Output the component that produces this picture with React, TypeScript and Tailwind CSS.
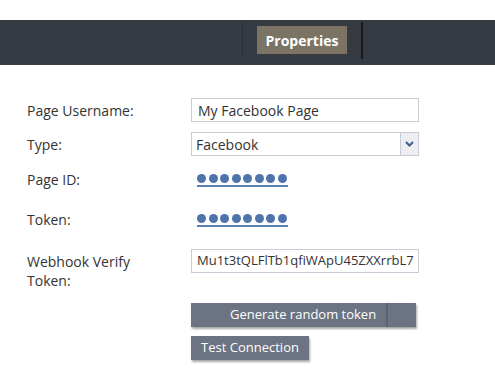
function Dots() {
  return (
    <div className="flex flex-col items-start">
      <div className="flex gap-[2.5px] pb-[2px]">
        {Array.from({ length: 8 }).map((_, i) => (
          <span key={i} className="h-[9px] w-[9px] rounded-full bg-[#4f74ab]" />
        ))}
      </div>
      <div className="h-[1.5px] w-[91px] bg-[#5a7fb5]" />
    </div>
  );
}

export default function App() {
  return (
    <div className="h-[388px] w-[495px] bg-white font-['Open_Sans',sans-serif] text-[#333]">
      <div className="h-5" />
      <div className="flex h-[45px] items-start bg-[#363a43]">
        <div className="ml-[242px] mt-[2px] h-[36px] w-px bg-[#2a2d34]" />
        <div className="ml-[14px] mt-[6px] flex h-[28px] w-[90px] items-center justify-center bg-[#7b7465] text-[14px] font-bold text-white">
          Properties
        </div>
        <div className="ml-[14px] mt-[2px] h-[37px] w-[2px] bg-[#16181c]" />
      </div>

      <div className="grid grid-cols-[164px_228px] pl-[27px] pt-[33px] text-[14px]">
        <div className="flex h-6 items-center">Page Username:</div>
        <div className="flex h-6 items-center border border-[#c9cbd6] px-[6px]">My Facebook Page</div>

        <div className="mt-[10px] flex h-6 items-center">Type:</div>
        <div className="mt-[10px] flex h-6 items-center border border-[#c9cbd6]">
          <span className="flex-1 pl-[4px]">Facebook</span>
          <div className="flex h-full w-[18px] items-center justify-center border-l border-[#c9cbd6] bg-[#eceef2]">
            <svg width="9" height="6" viewBox="0 0 9 6">
              <path d="M1 1l3.5 3.5L8 1" stroke="#3d5f8f" strokeWidth="2" fill="none" />
            </svg>
          </div>
        </div>

        <div className="mt-[11px] flex h-6 items-center">Page ID:</div>
        <div className="mt-[11px] flex h-6 items-center pl-[6px] pt-[3px]">
          <Dots />
        </div>

        <div className="mt-[16px] flex h-6 items-center">Token:</div>
        <div className="mt-[16px] flex h-6 items-center pl-[6px] pt-[3px]">
          <Dots />
        </div>

        <div className="mt-[18px] pt-[3px] leading-[19px]">
          Webhook Verify
          <br />
          Token:
        </div>
        <div className="mt-[18px] flex h-6 items-center overflow-hidden whitespace-nowrap border border-[#c9cbd6] pl-[5px] text-[13px]">
          Mu1t3tQLFlTb1qfiWApU45ZXXrrbL7
        </div>

        <div />
        <div className="mt-[13px] flex flex-col items-start gap-[9px] text-[13px]">
          <div className="flex h-6 w-[225px] items-center bg-[#6c7383] text-white shadow-[1px_2px_2px_rgba(0,0,0,0.35)]">
            <span className="flex-1 pl-[39px]">Generate random token</span>
            <div className="h-full w-[29px] border-l border-[#5d6372] shadow-[-1px_0_1px_rgba(0,0,0,0.15)]" />
          </div>
          <div className="flex h-6 w-[118px] items-center justify-center bg-[#6c7383] text-white shadow-[1px_2px_2px_rgba(0,0,0,0.35)]">
            Test Connection
          </div>
        </div>
      </div>
    </div>
  );
}
